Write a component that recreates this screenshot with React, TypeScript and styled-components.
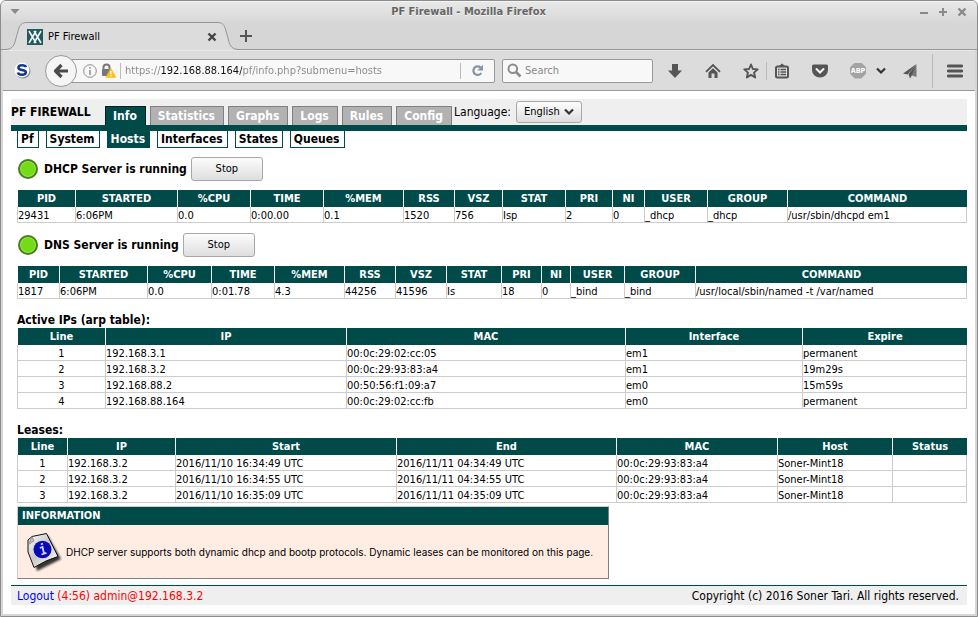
import React from "react";
import styled, { createGlobalStyle, css } from "styled-components";

const teal = "#004a4a";
const sans = '"DejaVu Sans Condensed", "DejaVu Sans", sans-serif';

const GlobalStyle = createGlobalStyle`
  *, *::before, *::after { box-sizing: border-box; }
  body { margin: 0; background: #fff; font: 11px/16px ${sans}; color: #000; }
  button, input, select { font: inherit; color: inherit; }
  svg { display: block; flex: none; }
`;

/* ---------- browser window ---------- */

const Window = styled.div`
  min-height: 100vh;
  display: flex;
  flex-direction: column;
  border: 1px solid #8c8c8c;
  border-radius: 6px 6px 0 0;
  background: #d6d6d6;
  overflow: hidden;
`;

const TitleBar = styled.header`
  display: grid;
  grid-template-columns: 1fr auto 1fr;
  align-items: center;
  height: 21px;
  padding: 0 10px 0 9px;
  border-top: 1px solid #f4f4f4;
  background: linear-gradient(#e8e8e8, #d8d8d8);
`;

const WindowTitle = styled.h1`
  margin: 0 40px 0 0;
  font-size: 11px;
  line-height: 16px;
  color: #666;
  text-shadow: 0 1px 0 #f4f4f4;
`;

const BareButton = styled.button`
  display: flex;
  align-items: center;
  justify-content: center;
  padding: 0;
  border: 0;
  background: none;
`;

const WindowMenuButton = styled(BareButton)`
  justify-self: start;
`;

const WindowButtons = styled.div`
  display: flex;
  justify-content: flex-end;
  gap: 9px;
`;

const TabStrip = styled.div`
  display: flex;
  align-items: flex-end;
  height: 28px;
  padding-left: 3px;
  border-bottom: 1px solid #999;
`;

const Tab = styled.div`
  display: flex;
  margin-bottom: -1px;
`;

const TabBody = styled.div`
  display: flex;
  align-items: center;
  gap: 5px;
  width: 190px;
  height: 28px;
  border-top: 1px solid #8f979c;
  background: #dcdcdc;
`;

const TabLabel = styled.span`
  flex: 1;
`;

const NewTab = styled(BareButton)`
  width: 12px;
  height: 26px;
`;

const Toolbar = styled.div`
  display: flex;
  align-items: center;
  height: 41px;
  margin: 0 2px;
  padding-left: 11px;
  padding-right: 12px;
  border-top: 1px solid #e8e8e8;
  border-bottom: 1px solid #999;
  background: #dcdcdc;
`;

const BackButton = styled(BareButton)`
  z-index: 1;
  flex: none;
  width: 32px;
  height: 32px;
  margin: 0 -8px 0 14px;
  border: 1px solid #999;
  border-radius: 50%;
  background: #f5f5f5;
`;

const Field = styled.label<{ $width?: number }>`
  display: flex;
  align-items: center;
  flex: ${(p) => (p.$width ? `0 0 ${p.$width}px` : "1 1 0")};
  min-width: 0;
  height: 24px;
  border: 1px solid #999;
  border-radius: 2px;
  background: #f8f8f8;
`;

const UrlField = styled(Field)`
  gap: 4px;
  padding: 0 10px 0 13px;
`;

const SearchField = styled(Field)`
  gap: 3px;
  margin: 0 14px 0 7px;
  padding: 0 4px;
`;

const TextInput = styled.input`
  flex: 1;
  min-width: 0;
  height: 16px;
  padding: 0;
  border: 0;
  outline: 0;
  background: none;
  color: #888;
  &::placeholder { color: #888; opacity: 1; }
`;

/* The host part of the address is darker than the scheme and the path. */
const UrlInput = styled(TextInput)`
  color: transparent;
  background: linear-gradient(90deg, #888 0 36px, #111 36px 117px, #888 117px);
  -webkit-background-clip: text;
  background-clip: text;
`;

const Divider = styled.span<{ $height: number }>`
  flex: none;
  width: 1px;
  height: ${(p) => p.$height}px;
  background: #bbb;
`;

const Group = styled.div<{ $gap: number }>`
  display: flex;
  align-items: center;
  flex: none;
  gap: ${(p) => p.$gap}px;
`;

/* ---------- page ---------- */

const Page = styled.main`
  flex: 1;
  margin: 0 2px 2px;
  padding: 8px 8px 9px;
  background: #fff;
`;

const PageHeader = styled.div`
  display: flex;
  align-items: flex-end;
  height: 32px;
  border-bottom: 6px solid ${teal};
  background: #efefef;
`;

const Brand = styled.strong`
  width: 94px;
  height: 21px;
  font-size: 12px;
`;

const MainNav = styled.nav`
  display: flex;
  gap: 4px;
`;

const MainTab = styled.a<{ $active?: boolean }>`
  height: 19px;
  padding: 1px 8px 0 7px;
  border: 1px solid ${(p) => (p.$active ? "#002020" : "#808080")};
  border-bottom: 0;
  background: ${(p) => (p.$active ? teal : "#b2b2b2")};
  color: #fff;
  font-size: 12px;
  font-weight: bold;
  text-decoration: none;
`;

const Language = styled.label`
  display: flex;
  align-items: center;
  gap: 5px;
  height: 26px;
  margin-left: 2px;
  font-size: 12px;
`;

const SelectBox = styled.span`
  display: grid;
  align-items: center;
  font-size: 11px;
  > * { grid-area: 1 / 1; }
  > svg { justify-self: end; margin-right: 7px; pointer-events: none; }
`;

const raised = css`
  border: 1px solid #a8a8a8;
  border-radius: 3px;
  background: linear-gradient(#fcfcfc, #dedede);
`;

const Select = styled.select`
  ${raised}
  appearance: none;
  width: 66px;
  height: 22px;
  padding: 0 0 0 7px;
`;

const SubNav = styled.nav`
  display: flex;
  gap: 7px;
  padding-left: 6px;
`;

const SubTab = styled.a<{ $active?: boolean }>`
  height: 17px;
  padding: 0 4px 0 3px;
  border: 1px solid ${teal};
  border-top: 0;
  background: ${(p) => (p.$active ? teal : "#fff")};
  color: ${(p) => (p.$active ? "#fff" : "#000")};
  font-size: 12px;
  font-weight: bold;
  text-decoration: none;
`;

const Content = styled.div`
  padding-left: 6px;
`;

const StatusRow = styled.div`
  display: flex;
  align-items: center;
  margin: 9px 0 9px 1px;
`;

const Lamp = styled.span`
  width: 20px;
  height: 20px;
  margin-right: 6px;
  border: 2px solid #4a7d1c;
  border-radius: 50%;
  background: #73dc16;
  box-shadow: inset 0 0 0 1px #9be553;
`;

const StatusText = styled.strong`
  margin-right: 4px;
  font-size: 12px;
`;

const StopButton = styled.button`
  ${raised}
  width: 72px;
  height: 24px;
`;

const SectionTitle = styled.h2`
  margin: 13px 0 0;
  font-size: 12px;
  line-height: 15px;
`;

const Table = styled.table`
  width: 100%;
  margin-bottom: 1px;
  table-layout: fixed;
  border-collapse: separate;
  border-spacing: 0;
`;

/* Plain block wrapper whose flow keeps neighbouring margins apart. */
const TableFrame = styled.div`
  display: flow-root;
`;

const Col = styled.col<{ $width: number }>`
  width: ${(p) => p.$width}px;
`;

const Th = styled.th`
  height: 17px;
  padding: 0;
  border-left: 1px solid #fff;
  background: ${teal};
  color: #fff;
  line-height: 16px;
`;

const Td = styled.td<{ $center?: boolean }>`
  height: 16px;
  padding: 2px 0 0;
  border: solid #ccc;
  border-width: 0 0 1px 1px;
  line-height: 13px;
  white-space: nowrap;
  text-align: ${(p) => (p.$center ? "center" : "left")};
  &:last-child { border-right-width: 1px; }
`;

const InfoBox = styled.section`
  max-width: 592px;
  margin-top: 2px;
  border: 1px solid;
  border-color: #ccc #808080 #808080 #ccc;
  background: #ffece3;
`;

const InfoTitle = styled.h2`
  height: 18px;
  margin: 0;
  padding: 1px 4px;
  background: ${teal};
  color: #fff;
  font-size: 11px;
  line-height: 16px;
`;

const InfoBody = styled.div`
  display: flex;
  align-items: center;
  gap: 4px;
  height: 53px;
  padding-left: 8px;
  font-family: Inter, ${sans};
  font-size: 10px;
`;

const Footer = styled.footer`
  display: flex;
  justify-content: space-between;
  height: 20px;
  margin-top: 6px;
  padding: 2px 8px 0 6px;
  border-top: 1px solid ${teal};
  background: #efefef;
  font-size: 12px;
`;

const Session = styled.span`
  color: #f00;
`;

const LogoutLink = styled.a`
  color: #00f;
  text-decoration: none;
`;

/* ---------- icons ---------- */

const ink = "#555";

const TabEdge = ({ flip }: { flip?: boolean }) => (
  <svg width="23" height="28" viewBox="0 0 23 28">
    <g transform={flip ? "matrix(-1 0 0 1 23 0)" : undefined}>
      <path d="M0 27.5H1C7 27.5 10 25 11.500 18L14 9C15.500 2.500 18 .5 23 .5V28H0Z" fill="#dcdcdc" />
      <path d="M0 27.500H1C7 27.500 10 25 11.500 18L14 9C15.500 2.500 18 .5 23 .5" fill="none" stroke="#8f979c" />
    </g>
  </svg>
);

const Favicon = () => (
  <svg width="16" height="16" viewBox="0 0 16 16">
    <rect width="16" height="16" fill="#24595c" />
    <path d="M2 2 9 14M9 2 2 14M7 2 14 14M14 2 7 14" stroke="#eaf4f4" strokeWidth="1.600" fill="none" />
  </svg>
);

const ScriptBadge = () => (
  <svg width="17" height="17" viewBox="0 0 17 17">
    <circle cx="9" cy="9" r="7.500" fill="#8b8b8b" />
    <circle cx="8" cy="8" r="7.500" fill="#fafafa" />
    <path d="M12 5.200C11.500 3.800 10 3.200 8 3.200 5.800 3.200 4.400 4.200 4.400 5.700 4.400 8.800 11.800 7 11.800 10.300 11.800 11.900 10.200 12.800 8 12.800 5.800 12.800 4.300 12 3.900 10.500" fill="none" stroke="#17378c" strokeWidth="2.500" />
  </svg>
);

const BackArrow = () => (
  <svg width="16" height="16" viewBox="0 0 16 16">
    <path d="M8.500 2 2.500 8 8.500 14M3 8H15" fill="none" stroke="#4a4a4a" strokeWidth="3.200" strokeLinejoin="round" />
  </svg>
);

const SiteInfo = () => (
  <svg width="14" height="14" viewBox="0 0 14 14">
    <circle cx="7" cy="7" r="6.300" fill="none" stroke="#8e8e8e" />
    <path d="M7 3V4.700M7 6V11" stroke="#8e8e8e" strokeWidth="1.500" />
  </svg>
);

const LockWarning = () => (
  <svg width="15" height="15" viewBox="0 0 15 15">
    <path d="M2.500 7V4.500a3 3 0 0 1 6 0V7" fill="none" stroke="#777" strokeWidth="2" />
    <rect x="1" y="6" width="9" height="7" rx="1" fill="#777" />
    <path d="M9.800 5 15 14.500H4.800Z" fill="#ffbf1a" stroke="#ffbf1a" strokeWidth=".5" />
    <path d="M9.900 8V11.200M9.900 12V13.300" stroke="#fff" strokeWidth="1.400" />
  </svg>
);

const Reload = () => (
  <svg width="13" height="13" viewBox="0 0 13 13">
    <path d="M9.500 3.400A4.300 4.300 0 1 0 10.300 9" fill="none" stroke="#8494a4" strokeWidth="2.200" />
    <path d="M12 .8V6.500H6.300Z" fill="#8494a4" />
  </svg>
);

const Magnifier = () => (
  <svg width="15" height="15" viewBox="0 0 15 15">
    <circle cx="5.800" cy="5.800" r="4.300" fill="none" stroke="#8c8c8c" strokeWidth="2" />
    <path d="m9 9 4.500 4.500" stroke="#8c8c8c" strokeWidth="2.600" />
  </svg>
);

const Icon = ({ children, width = 16 }: { children: React.ReactNode; width?: number }) => (
  <svg width={width} height="16" viewBox={`0 0 ${width} 16`}>{children}</svg>
);

const DownArrow = () => <Icon><path d="M5 1H11V7.500H15L8 15 1 7.500H5Z" fill={ink} /></Icon>;

const Home = () => (
  <Icon>
    <path d="M1 8.800 8 2 15 8.800" fill="none" stroke={ink} strokeWidth="1.800" />
    <path d="M3.500 9.500 8 5.200 12.500 9.500V15H9.500V10.500H6.500V15H3.500Z" fill={ink} />
  </Icon>
);

const Star = () => (
  <Icon>
    <path d="M8 1.500 9.900 6 14.700 6.400 11 9.600 12.200 14.500 8 11.900 3.800 14.500 5 9.600 1.300 6.400 6.100 6Z" fill="none" stroke={ink} strokeWidth="1.900" strokeLinejoin="round" />
  </Icon>
);

const Bookmarks = () => (
  <Icon>
    <path d="M5 3 8 .5 11 3Z" fill={ink} />
    <rect x="2" y="3.500" width="12" height="11" rx="1.500" fill="none" stroke={ink} strokeWidth="2" />
    <path d="M4 6.500H5.500M6.500 6.500H12M4 9H5.500M6.500 9H12M4 11.500H5.500M6.500 11.500H12" stroke={ink} strokeWidth="1.300" />
  </Icon>
);

const Pocket = () => (
  <Icon>
    <path d="M1.500 1.500H14.500Q16 1.500 16 3V7A8 7.500 0 0 1 0 7V3Q0 1.500 1.500 1.500Z" fill={ink} />
    <path d="M4.500 6 8 9.500 11.500 6" fill="none" stroke="#f4f4f4" strokeWidth="2" strokeLinecap="round" />
  </Icon>
);

const BlockBadge = styled.span`
  display: flex;
  align-items: center;
  justify-content: center;
  width: 16px;
  height: 16px;
  background: #a3a3a3;
  clip-path: polygon(30% 0, 70% 0, 100% 30%, 100% 70%, 70% 100%, 30% 100%, 0 70%, 0 30%);
  color: #fff;
  font: bold 7px/16px ${sans};
`;

const Chevron = ({ width }: { width: number }) => (
  <svg width={width} height="8" viewBox="0 0 10 8">
    <path d="M1 1.500 5 5.500 9 1.500" fill="none" stroke="#333" strokeWidth="2.200" />
  </svg>
);

const PaperPlane = () => (
  <Icon>
    <path d="M14.500 1 1 10.500 5.500 11.500Z" fill={ink} />
    <path d="M14.500 1V14L8.500 12Z" fill="#777" />
    <path d="M14 1.500 6.500 11 8 15.500 9.500 13Z" fill={ink} />
  </Icon>
);

const Menu = () => <Icon><path d="M1.300 3H14.700M1.300 8H14.700M1.300 13H14.700" stroke={ink} strokeWidth="2.800" strokeLinecap="round" /></Icon>;

const InfoPaper = () => (
  <svg width="36" height="40" viewBox="0 0 36 40">
    <defs>
      <linearGradient id="paper" x1="0" y1="0" x2="1" y2="1">
        <stop offset="0" stopColor="#fff" />
        <stop offset=".45" stopColor="#c8c8c8" />
        <stop offset="1" stopColor="#fff" />
      </linearGradient>
      <filter id="soft" x="-20%" y="-20%" width="150%" height="150%"><feGaussianBlur stdDeviation="1.300" /></filter>
    </defs>
    <path d="M5 11 22 4 35 27 11 39Z" fill="#222" opacity=".9" filter="url(#soft)" />
    <path d="M2 8 6 4.500 20.500 1.500 32 24.500Q20 28 8 35.500L2 20Z" fill="url(#paper)" stroke="#111" />
    <path d="M2 13 8 9 6 4.500Z" fill="#bbb" stroke="#777" strokeWidth=".6" />
    <ellipse cx="16.500" cy="17.500" rx="9" ry="8.800" fill="#0a0ab4" />
    <path d="M14.800 12.500 17 11.500M13.800 16 16.500 15 18 21.500M15.500 22.500 20.500 20.800" fill="none" stroke="#c9d3ff" strokeWidth="1.800" />
  </svg>
);

/* ---------- data ---------- */

const mainTabs = ["Info", "Statistics", "Graphs", "Logs", "Rules", "Config"];
const subTabs = ["Pf", "System", "Hosts", "Interfaces", "States", "Queues"];
const processHeads = ["PID", "STARTED", "%CPU", "TIME", "%MEM", "RSS", "VSZ", "STAT", "PRI", "NI", "USER", "GROUP", "COMMAND"];

interface GridProps {
  heads: string[];
  widths: number[];
  rows: string[][];
  numbered?: boolean;
}

const DataTable = ({ heads, widths, rows, numbered }: GridProps) => (
  <TableFrame>
    <Table>
      <colgroup>{widths.map((w, i) => <Col key={i} $width={w} />)}</colgroup>
      <thead><tr>{heads.map((h) => <Th key={h} scope="col">{h}</Th>)}</tr></thead>
      <tbody>
        {rows.map((row) => (
          <tr key={row[0]}>{row.map((cell, i) => <Td key={i} $center={numbered && i === 0}>{cell}</Td>)}</tr>
        ))}
      </tbody>
    </Table>
  </TableFrame>
);

const ServerStatus = ({ name }: { name: string }) => (
  <StatusRow>
    <Lamp />
    <StatusText>{name} Server is running</StatusText>
    <StopButton type="button">Stop</StopButton>
  </StatusRow>
);

export default function App() {
  return (
    <Window>
      <GlobalStyle />
      <TitleBar>
        <WindowMenuButton aria-label="Window menu">
          <svg width="10" height="6" viewBox="0 0 10 6"><path d="M.5 0H9.500L5 5Z" fill="#8a8a8a" /></svg>
        </WindowMenuButton>
        <WindowTitle>PF Firewall - Mozilla Firefox</WindowTitle>
        <WindowButtons>
          <BareButton aria-label="Minimize"><svg width="10" height="10"><path d="M1 6H9" stroke="#8a8a8a" strokeWidth="2" /></svg></BareButton>
          <BareButton aria-label="Maximize"><svg width="10" height="10"><path d="M1 5H9M5 1V9" stroke="#8a8a8a" strokeWidth="2" /></svg></BareButton>
          <BareButton aria-label="Close"><svg width="10" height="10"><path d="M1.500 1.500 8.500 8.500M8.500 1.500 1.500 8.500" stroke="#8a8a8a" strokeWidth="2.400" /></svg></BareButton>
        </WindowButtons>
      </TitleBar>

      <TabStrip>
        <Tab>
          <TabEdge />
          <TabBody>
            <Favicon />
            <TabLabel>PF Firewall</TabLabel>
            <BareButton aria-label="Close tab"><svg width="10" height="10"><path d="M1.500 1.500 8.500 8.500M8.500 1.500 1.500 8.500" stroke="#444" strokeWidth="2.400" /></svg></BareButton>
          </TabBody>
          <TabEdge flip />
        </Tab>
        <NewTab aria-label="New tab"><svg width="12" height="12"><path d="M0 6H12M6 0V12" stroke="#555" strokeWidth="2" /></svg></NewTab>
      </TabStrip>

      <Toolbar>
        <BareButton aria-label="Script blocker"><ScriptBadge /></BareButton>
        <BackButton aria-label="Back"><BackArrow /></BackButton>
        <UrlField>
          <SiteInfo />
          <LockWarning />
          <Divider $height={16} />
          <UrlInput aria-label="Address" defaultValue="https://192.168.88.164/pf/info.php?submenu=hosts" />
          <Group $gap={10}>
            <Divider $height={16} />
            <BareButton aria-label="Reload"><Reload /></BareButton>
          </Group>
        </UrlField>
        <SearchField $width={151}>
          <Magnifier />
          <TextInput aria-label="Search" placeholder="Search" />
        </SearchField>
        <Group $gap={22}>
          <BareButton aria-label="Downloads"><DownArrow /></BareButton>
          <BareButton aria-label="Home"><Home /></BareButton>
          <Group $gap={7}>
            <BareButton aria-label="Bookmark this page"><Star /></BareButton>
            <Divider $height={18} />
            <BareButton aria-label="Bookmarks"><Bookmarks /></BareButton>
          </Group>
          <BareButton aria-label="Save to Pocket"><Pocket /></BareButton>
          <Group $gap={14}>
            <Group $gap={16}>
              <Group $gap={10}>
                <BareButton aria-label="Ad blocker"><BlockBadge>ABP</BlockBadge></BareButton>
                <BareButton aria-label="Ad blocker options"><Chevron width={10} /></BareButton>
              </Group>
              <BareButton aria-label="Send page"><PaperPlane /></BareButton>
            </Group>
            <Divider $height={34} />
            <BareButton aria-label="Open menu"><Menu /></BareButton>
          </Group>
        </Group>
      </Toolbar>

      <Page>
        <PageHeader>
          <Brand>PF FIREWALL</Brand>
          <MainNav>
            {mainTabs.map((t) => <MainTab key={t} href="#" $active={t === "Info"}>{t}</MainTab>)}
          </MainNav>
          <Language>
            Language:
            <SelectBox>
              <Select defaultValue="English"><option>English</option></Select>
              <Chevron width={12} />
            </SelectBox>
          </Language>
        </PageHeader>
        <SubNav>
          {subTabs.map((t) => <SubTab key={t} href="#" $active={t === "Hosts"}>{t}</SubTab>)}
        </SubNav>

        <Content>
          <ServerStatus name="DHCP" />
          <DataTable
            heads={processHeads}
            widths={[58, 102, 73, 73, 80, 51, 48, 63, 47, 32, 63, 80, 180]}
            rows={[["29431", "6:06PM", "0.0", "0:00.00", "0.1", "1520", "756", "Isp", "2", "0", "_dhcp", "_dhcp", "/usr/sbin/dhcpd em1"]]}
          />
          <ServerStatus name="DNS" />
          <DataTable
            heads={processHeads}
            widths={[42, 88, 64, 63, 70, 51, 51, 55, 40, 29, 54, 71, 272]}
            rows={[["1817", "6:06PM", "0.0", "0:01.78", "4.3", "44256", "41596", "Is", "18", "0", "_bind", "_bind", "/usr/local/sbin/named -t /var/named"]]}
          />
          <SectionTitle>Active IPs (arp table):</SectionTitle>
          <DataTable
            numbered
            heads={["Line", "IP", "MAC", "Interface", "Expire"]}
            widths={[88, 241, 279, 177, 165]}
            rows={[
              ["1", "192.168.3.1", "00:0c:29:02:cc:05", "em1", "permanent"],
              ["2", "192.168.3.2", "00:0c:29:93:83:a4", "em1", "19m29s"],
              ["3", "192.168.88.2", "00:50:56:f1:09:a7", "em0", "15m59s"],
              ["4", "192.168.88.164", "00:0c:29:02:cc:fb", "em0", "permanent"],
            ]}
          />
          <SectionTitle>Leases:</SectionTitle>
          <DataTable
            numbered
            heads={["Line", "IP", "Start", "End", "MAC", "Host", "Status"]}
            widths={[50, 108, 221, 220, 161, 115, 75]}
            rows={[
              ["1", "192.168.3.2", "2016/11/10 16:34:49 UTC", "2016/11/11 04:34:49 UTC", "00:0c:29:93:83:a4", "Soner-Mint18", ""],
              ["2", "192.168.3.2", "2016/11/10 16:34:55 UTC", "2016/11/11 04:34:55 UTC", "00:0c:29:93:83:a4", "Soner-Mint18", ""],
              ["3", "192.168.3.2", "2016/11/10 16:35:09 UTC", "2016/11/11 04:35:09 UTC", "00:0c:29:93:83:a4", "Soner-Mint18", ""],
            ]}
          />
          <InfoBox>
            <InfoTitle>INFORMATION</InfoTitle>
            <InfoBody>
              <InfoPaper />
              DHCP server supports both dynamic dhcp and bootp protocols. Dynamic leases can be monitored on this page.
            </InfoBody>
          </InfoBox>
        </Content>

        <Footer>
          <Session><LogoutLink href="#">Logout</LogoutLink> (4:56) admin@192.168.3.2</Session>
          <span>Copyright (c) 2016 Soner Tari. All rights reserved.</span>
        </Footer>
      </Page>
    </Window>
  );
}
